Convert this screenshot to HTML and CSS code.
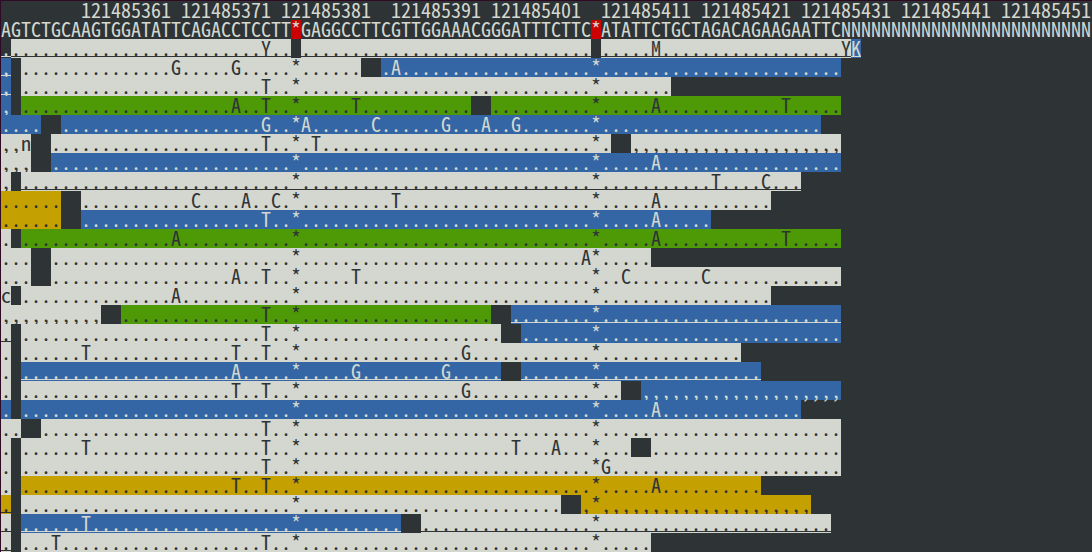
FILE: index.html
```html
<!DOCTYPE html>
<html lang="en">
<head>
<meta charset="utf-8">
<title>Alignment viewer</title>
<link rel="stylesheet" href="styles.css">
</head>
<body>
<main class="terminal" id="terminal"></main>
<script src="viewer.js"></script>
</body>
</html>
```

FILE: styles.css
```css
html,
body {
  margin: 0;
  min-height: 100%;
  background: #2e3436;
}

body {
  overflow: hidden;
}

.terminal {
  box-sizing: border-box;
  min-height: 100vh;
  border-top: 1px solid #300a24;
  border-left: 1px solid #300a24;
  color: #d3d7cf;
  font-family: "Noto Sans Mono CJK SC", "Noto Sans Mono CJK JP", "DejaVu Sans Mono", monospace;
  font-size: 20px;
  line-height: 17px;
}

.row {
  display: flex;
  height: 19px;
  white-space: pre;
}

.run {
  flex: none;
  height: 19px;
}

.light {
  background: #d3d7cf;
  color: #2e3436;
}

.blue {
  background: #3465a4;
}

.green {
  background: #4e9a06;
  color: #2e3436;
}

.yellow {
  background: #c4a000;
  color: #2e3436;
}

.red {
  background: #cc0000;
}

.underlined {
  text-decoration: underline 1px;
  text-decoration-skip-ink: none;
  text-underline-offset: 0;
}
```

FILE: viewer.js
```js
// Each row is a list of runs: [first column, end column, style, fill, { column: base }].
// A fill longer than one character is printed as it stands.
const U = " underlined";
const rows = [
  [[8, 108, "", "121485361 121485371 121485381  121485391 121485401  121485411 121485421 121485431 121485441 121485451"]],
  [
    [0, 29, "", "AGTCTGCAAGTGGATATTCAGACCTCCTT"],
    [29, 30, "red", "*"],
    [30, 59, "", "GAGGCCTTCGTTGGAAACGGGATTTCTTC"],
    [59, 60, "red", "*"],
    [60, 109, "", "ATATTCTGCTAGACAGAAGAATTCNNNNNNNNNNNNNNNNNNNNNNNNN"]
  ],
  [[0, 1, U, "."], [1, 29, "light" + U, ".", {26: "Y"}], [30, 59, "light" + U, "."], [60, 85, "light" + U, ".", {65: "M", 84: "Y"}], [85, 86, "blue" + U, "K"]],
  [[0, 1, "blue" + U, ","], [2, 36, "light", ".", {17: "G", 23: "G"}], [38, 84, "blue", ".", {39: "A"}]],
  [[0, 1, "blue" + U, ","], [2, 67, "light", ".", {26: "T"}]],
  [[0, 1, "blue", ","], [2, 47, "green", ".", {23: "A", 26: "T", 35: "T"}], [49, 84, "green", ".", {65: "A", 78: "T"}]],
  [[0, 4, "blue", "."], [6, 82, "blue", ".", {26: "G", 30: "A", 37: "C", 44: "G", 48: "A", 51: "G"}]],
  [[0, 3, "light", ",,n"], [5, 61, "light", ".", {26: "T", 31: "T"}], [63, 84, "light", ","]],
  [[0, 3, "light", ","], [5, 84, "blue", ".", {65: "A"}]],
  [[0, 1, "light", ","], [2, 80, "light" + U, ".", {71: "T", 76: "C"}]],
  [[0, 6, "yellow", "."], [8, 77, "light", ".", {19: "C", 24: "A", 27: "C", 39: "T", 65: "A"}]],
  [[0, 6, "yellow", "."], [8, 71, "blue", ".", {26: "T", 65: "A"}]],
  [[0, 1, "light", "."], [2, 84, "green", ".", {17: "A", 65: "A", 78: "T"}]],
  [[0, 3, "light", "."], [5, 65, "light", ".", {58: "A"}]],
  [[0, 3, "light", "."], [5, 84, "light", ".", {23: "A", 26: "T", 35: "T", 62: "C", 70: "C"}]],
  [[0, 1, "light", "c"], [2, 77, "light", ".", {17: "A"}]],
  [[0, 10, "light", ","], [12, 49, "green", ".", {26: "T"}], [51, 84, "blue" + U, "."]],
  [[0, 1, "light" + U, "."], [2, 50, "light", ".", {26: "T"}], [52, 84, "blue", "."]],
  [[0, 1, "light", "."], [2, 74, "light", ".", {8: "T", 23: "T", 26: "T", 46: "G"}]],
  [[0, 1, "light", "."], [2, 50, "blue" + U, ".", {23: "A", 35: "G", 44: "G"}], [52, 76, "blue" + U, "."]],
  [[0, 1, "light", "."], [2, 62, "light", ".", {23: "T", 26: "T", 46: "G"}], [64, 84, "blue", ","]],
  [[0, 1, "blue", "."], [2, 80, "blue", ".", {65: "A"}]],
  [[0, 2, "light", "."], [4, 84, "light", ".", {26: "T"}]],
  [[0, 1, "light", "."], [2, 63, "light", ".", {8: "T", 26: "T", 51: "T", 55: "A"}], [65, 84, "light", "."]],
  [[0, 1, "light", "."], [2, 84, "light", ".", {26: "T", 60: "G"}]],
  [[0, 1, "light", "."], [2, 76, "yellow", ".", {23: "T", 26: "T", 65: "A"}]],
  [[0, 1, "yellow" + U, "."], [2, 56, "light", "."], [58, 81, "yellow", ","]],
  [[0, 1, "light" + U, "."], [2, 40, "blue" + U, ".", {8: "T"}], [42, 83, "light" + U, "."]],
  [[0, 1, "light" + U, "."], [2, 65, "light", ".", {5: "T", 26: "T"}]]
];

// Reads show a star wherever the reference has an insertion gap.
const gaps = [29, 59];

function runText([start, end, , fill, bases = {}]) {
  if (fill.length > 1) return fill;
  let text = "";
  for (let column = start; column < end; column++) {
    text += bases[column] || (gaps.includes(column) ? "*" : fill);
  }
  return text;
}

function appendRun(row, style, text) {
  const run = document.createElement("span");
  run.className = ("run " + style).trim();
  run.textContent = text;
  row.append(run);
}

const terminal = document.getElementById("terminal");
for (const runs of rows) {
  const row = document.createElement("div");
  row.className = "row";
  let column = 0;
  for (const run of runs) {
    if (run[0] > column) appendRun(row, "", " ".repeat(run[0] - column));
    appendRun(row, run[2], runText(run));
    column = run[1];
  }
  terminal.append(row);
}
```
